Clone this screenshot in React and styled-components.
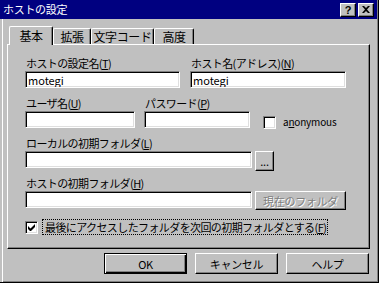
import React from 'react'
import styled, { createGlobalStyle, css } from 'styled-components'

const GlobalStyle = createGlobalStyle`
  html, body {
    margin: 0;
    padding: 0;
    background: #c0c0c0;
    overflow: hidden;
  }
  body {
    font-family: "Noto Sans CJK JP", "Liberation Sans", sans-serif;
    font-size: 12px;
    color: #000;
  }
`

const FONT = `"Noto Sans CJK JP", "Liberation Sans", sans-serif`

const Window = styled.div`
  width: 379px;
  height: 283px;
  box-sizing: border-box;
  background: #c0c0c0;
  border-right: 1px solid #000;
  border-bottom: 1px solid #000;
  box-shadow: inset -1px -1px #808080;
  padding: 0 1px 0 0;
  display: flex;
  flex-direction: column;
`

const TitleBar = styled.div`
  height: 19px;
  background: #000080;
  color: #fff;
  display: flex;
  align-items: center;
  padding: 0 3px 0 3px;
  font-size: 11px;
  font-weight: 400;
  line-height: 19px;
`

const Title = styled.span`
  flex: 1;
  letter-spacing: -0.3px;
`

const TitleButton = styled.div`
  width: 16px;
  height: 14px;
  box-sizing: border-box;
  background: #c0c0c0;
  border-top: 1px solid #fff;
  border-left: 1px solid #fff;
  border-right: 1px solid #000;
  border-bottom: 1px solid #000;
  box-shadow: inset -1px -1px #808080;
  margin-left: 2px;
  display: flex;
  align-items: center;
  justify-content: center;
  color: #000;
  font-family: "Liberation Sans", sans-serif;
  font-weight: bold;
  font-size: 11px;
  line-height: 12px;
`

const Body = styled.div`
  flex: 1;
  display: flex;
  flex-direction: column;
  padding: 7px 0 0 7px;
  box-shadow: inset 2px 0 #c0c0c0, inset 3px 0 #fff;
`

const TabStrip = styled.div`
  display: flex;
  align-items: flex-end;
  height: 18px;
  padding-left: 2px;
  position: relative;
  z-index: 1;
`

const Tab = styled.div`
  box-sizing: border-box;
  width: ${p => p.$w}px;
  height: ${p => (p.$active ? 19 : 16)}px;
  margin-bottom: ${p => (p.$active ? -1 : 0)}px;
  background: #c0c0c0;
  border-top: 1px solid #fff;
  border-left: 1px solid #fff;
  border-right: 1px solid #000;
  border-radius: 2px 2px 0 0;
  box-shadow: inset -1px 0 #808080;
  display: flex;
  justify-content: center;
  padding-top: ${p => (p.$active ? 2 : 1)}px;
  font-size: 12px;
  line-height: 13px;
  letter-spacing: -0.4px;
`

const Panel = styled.div`
  width: 363px;
  height: 205px;
  box-sizing: border-box;
  border-top: 1px solid #fff;
  border-left: 1px solid #fff;
  border-right: 1px solid #000;
  border-bottom: 1px solid #000;
  box-shadow: inset -1px -1px #808080;
  padding: 12px 0 0 17px;
  display: flex;
  flex-direction: column;
`

const Row = styled.div`
  display: flex;
  height: 31px;
  margin-bottom: 9px;
`

const Field = styled.div`
  display: flex;
  flex-direction: column;
  margin-left: ${p => p.$ml || 0}px;
`

const Label = styled.div`
  height: 14px;
  line-height: 12px;
  font-size: 11px;
  letter-spacing: -0.6px;
  padding-left: 1px;
  white-space: nowrap;
  u {
    text-decoration: underline;
  }
`

const Line = styled.div`
  display: flex;
  align-items: flex-start;
  height: 17px;
`

const TextBox = styled.input`
  width: ${p => p.$w}px;
  height: 17px;
  box-sizing: border-box;
  margin: 0;
  padding: 0 2px;
  background: #fff;
  border-top: 1px solid #808080;
  border-left: 1px solid #808080;
  border-right: 1px solid #fff;
  border-bottom: 1px solid #fff;
  box-shadow: inset 1px 1px #000, inset -1px -1px #dfdfdf;
  font-family: ${FONT};
  font-size: 11px;
  line-height: 15px;
  outline: none;
  color: #000;
`

const raised = css`
  background: #c0c0c0;
  border-top: 1px solid #fff;
  border-left: 1px solid #fff;
  border-right: 1px solid #000;
  border-bottom: 1px solid #000;
  box-shadow: inset -1px -1px #808080;
`

const Button = styled.button`
  ${raised}
  box-sizing: border-box;
  width: ${p => p.$w}px;
  height: ${p => p.$h}px;
  margin: 0 0 0 ${p => p.$ml || 0}px;
  padding: 0;
  font-family: ${FONT};
  font-size: 11px;
  letter-spacing: -0.3px;
  color: ${p => (p.$disabled ? '#808080' : '#000')};
  text-shadow: ${p => (p.$disabled ? '1px 1px #fff' : 'none')};
  cursor: default;
  ${p =>
    p.$default &&
    css`
      border: 1px solid #000;
      box-shadow: inset 1px 1px #fff, inset -1px -1px #000, inset -2px -2px #808080;
    `}
`

const CheckBox = styled.span`
  display: inline-flex;
  align-items: center;
  justify-content: center;
  width: 13px;
  height: 13px;
  box-sizing: border-box;
  background: #fff;
  border-top: 1px solid #808080;
  border-left: 1px solid #808080;
  border-right: 1px solid #fff;
  border-bottom: 1px solid #fff;
  box-shadow: inset 1px 1px #000, inset -1px -1px #dfdfdf;
  flex-shrink: 0;
`

const CheckGroup = styled.div`
  display: flex;
  align-items: center;
  margin-left: ${p => p.$ml || 0}px;
  margin-top: ${p => p.$mt || 0}px;
  gap: 4px;
`

const CheckText = styled.span`
  font-size: ${p => p.$fs || 11}px;
  letter-spacing: ${p => p.$ls ?? -0.6}px;
  line-height: 14px;
  padding: 0 1px 0 2px;
  border: 1px dotted ${p => (p.$focus ? '#000' : 'transparent')};
  white-space: nowrap;
`

const Footer = styled.div`
  display: flex;
  justify-content: flex-end;
  gap: 8px;
  padding: 4px 8px 0 0;
`

const CheckMark = () => (
  <svg width="7" height="7" viewBox="0 0 7 7">
    <path d="M0 2v3l2 2h1l4-4V0L2.5 4.5z" fill="#000" />
  </svg>
)

const CloseGlyph = () => (
  <svg width="8" height="7" viewBox="0 0 8 7">
    <path d="M0 0h2l2 2 2-2h2L5 3.5 8 7H6L4 5 2 7H0l3-3.5z" fill="#000" />
  </svg>
)

export default function App() {
  return (
    <>
      <GlobalStyle />
      <Window>
        <TitleBar>
          <Title>ホストの設定</Title>
          <TitleButton>?</TitleButton>
          <TitleButton>
            <CloseGlyph />
          </TitleButton>
        </TitleBar>
        <Body>
          <TabStrip>
            <Tab $w={44} $active>基本</Tab>
            <Tab $w={38}>拡張</Tab>
            <Tab $w={63}>文字コード</Tab>
            <Tab $w={40}>高度</Tab>
          </TabStrip>
          <Panel>
            <Row>
              <Field>
                <Label>ホストの設定名(<u>T</u>)</Label>
                <TextBox $w={155} defaultValue="motegi" />
              </Field>
              <Field $ml={10}>
                <Label>ホスト名(アドレス)(<u>N</u>)</Label>
                <TextBox $w={156} defaultValue="motegi" />
              </Field>
            </Row>
            <Row>
              <Field>
                <Label>ユーザ名(<u>U</u>)</Label>
                <TextBox $w={110} />
              </Field>
              <Field $ml={9}>
                <Label>パスワード(<u>P</u>)</Label>
                <Line>
                  <TextBox $w={106} type="password" />
                  <CheckGroup $ml={13} $mt={3}>
                    <CheckBox />
                    <CheckText $fs={10} $ls={-0.2}>
                      a<u>n</u>onymous
                    </CheckText>
                  </CheckGroup>
                </Line>
              </Field>
            </Row>
            <Row>
              <Field>
                <Label>ローカルの初期フォルダ(<u>L</u>)</Label>
                <Line>
                  <TextBox $w={227} />
                  <Button $w={19} $h={20} $ml={3}>
                    ...
                  </Button>
                </Line>
              </Field>
            </Row>
            <Row>
              <Field>
                <Label>ホストの初期フォルダ(<u>H</u>)</Label>
                <Line>
                  <TextBox $w={227} />
                  <Button $w={91} $h={19} $ml={3} $disabled>
                    現在のフォルダ
                  </Button>
                </Line>
              </Field>
            </Row>
            <CheckGroup $mt={2}>
              <CheckBox>
                <CheckMark />
              </CheckBox>
              <CheckText $focus>
                最後にアクセスしたフォルダを次回の初期フォルダとする(<u>F</u>)
              </CheckText>
            </CheckGroup>
          </Panel>
          <Footer>
            <Button $w={83} $h={21} $default>
              OK
            </Button>
            <Button $w={83} $h={21}>
              キャンセル
            </Button>
            <Button $w={83} $h={21}>
              ヘルプ
            </Button>
          </Footer>
        </Body>
      </Window>
    </>
  )
}
